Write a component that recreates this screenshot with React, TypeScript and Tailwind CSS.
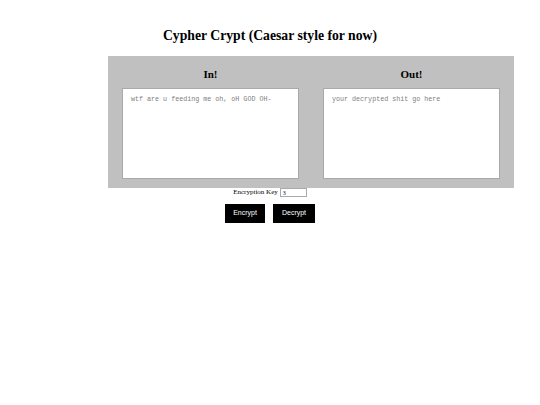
import { useState } from "react";

const shift = (text: string, key: number) =>
  text.replace(/[a-z]/gi, (c) => {
    const base = c <= "Z" ? 65 : 97;
    return String.fromCharCode(((((c.charCodeAt(0) - base + key) % 26) + 26) % 26) + base);
  });

export default function App() {
  const [input, setInput] = useState("");
  const [output, setOutput] = useState("");
  const [key, setKey] = useState("3");

  const k = parseInt(key) || 0;

  return (
    <div className="w-full bg-white font-['Liberation_Serif',serif] text-black">
      <h1 className="pt-[28px] text-center text-[13.7px] font-bold leading-[15px]">
        Cypher Crypt (Caesar style for now)
      </h1>

      <section className="mt-[13px] ml-[108px] w-[406px] bg-[#c0c0c0] px-[14px] pt-[12px] pb-[9px]">
        <div className="flex gap-[24px]">
          <div className="flex flex-1 flex-col">
            <h3 className="text-center text-[11px] font-bold leading-[12px]">In!</h3>
            <textarea
              className="mt-[8px] h-[91px] resize-none border border-[#a9a9a9] bg-white px-[8px] py-[6px] font-['Liberation_Mono',monospace] text-[6.7px] leading-[9px] outline-none placeholder:text-[#808080]"
              placeholder="wtf are u feeding me oh, oH GOD OH-"
              value={input}
              onChange={(e) => setInput(e.target.value)}
            />
          </div>
          <div className="flex flex-1 flex-col">
            <h3 className="text-center text-[11px] font-bold leading-[12px]">Out!</h3>
            <textarea
              className="mt-[8px] h-[91px] resize-none border border-[#a9a9a9] bg-white px-[8px] py-[6px] font-['Liberation_Mono',monospace] text-[6.7px] leading-[9px] outline-none placeholder:text-[#808080]"
              placeholder="your decrypted shit go here"
              value={output}
              onChange={(e) => setOutput(e.target.value)}
            />
          </div>
        </div>
      </section>

      <div className="flex items-center justify-center gap-[2px] text-[7px] leading-[9px]">
        <label htmlFor="key">Encryption Key</label>
        <input
          id="key"
          className="h-[9px] w-[27px] border border-[#a9a9a9] px-[2px] text-[6px] leading-[7px] outline-none"
          value={key}
          onChange={(e) => setKey(e.target.value)}
        />
      </div>

      <div className="mt-[7px] flex justify-center gap-[8px] font-['Liberation_Sans',sans-serif] text-[7px]">
        <button
          className="h-[19px] w-[40px] bg-black text-white"
          onClick={() => setOutput(shift(input, k))}
        >
          Encrypt
        </button>
        <button
          className="h-[19px] w-[42px] bg-black text-white"
          onClick={() => setInput(shift(output, -k))}
        >
          Decrypt
        </button>
      </div>
    </div>
  );
}
